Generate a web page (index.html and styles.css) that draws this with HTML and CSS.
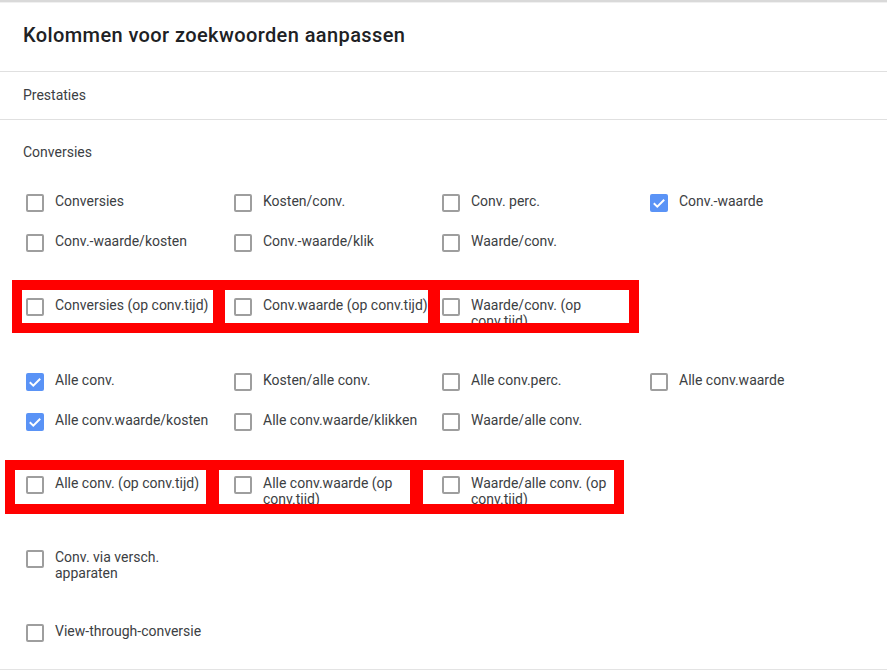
FILE: index.html
```html
<!DOCTYPE html>
<html lang="nl">
<head>
<meta charset="utf-8">
<title>Kolommen voor zoekwoorden aanpassen</title>
<link rel="stylesheet" href="styles.css">
</head>
<body>
<div class="dialog">
  <header class="header">
    <h1 class="title">Kolommen voor zoekwoorden aanpassen</h1>
  </header>
  <div class="section section-collapsed">Prestaties</div>
  <div class="section section-open">
    <div class="section-title">Conversies</div>

    <div class="grid grid-a">
      <label class="item"><span class="box"></span><span class="text">Conversies</span></label>
      <label class="item"><span class="box"></span><span class="text">Kosten/conv.</span></label>
      <label class="item"><span class="box"></span><span class="text">Conv. perc.</span></label>
      <label class="item"><span class="box checked"><svg viewBox="0 0 18 18"><polyline points="3.8,9.2 7.3,12.6 14.2,5.8"/></svg></span><span class="text">Conv.-waarde</span></label>
      <label class="item"><span class="box"></span><span class="text">Conv.-waarde/kosten</span></label>
      <label class="item"><span class="box"></span><span class="text">Conv.-waarde/klik</span></label>
      <label class="item"><span class="box"></span><span class="text">Waarde/conv.</span></label>
    </div>

    <div class="grid grid-hl grid-hl1">
      <label class="item"><span class="box"></span><span class="text">Conversies (op conv.tijd)</span></label>
      <label class="item"><span class="box"></span><span class="text">Conv.waarde (op conv.tijd)</span></label>
      <label class="item"><span class="box"></span><span class="text">Waarde/conv. (op conv.tijd)</span></label>
      <div class="mark mark1">
        <div class="hole"></div><div class="bar"></div><div class="hole"></div><div class="bar"></div><div class="hole"></div>
      </div>
    </div>

    <div class="grid grid-b">
      <label class="item"><span class="box checked"><svg viewBox="0 0 18 18"><polyline points="3.8,9.2 7.3,12.6 14.2,5.8"/></svg></span><span class="text">Alle conv.</span></label>
      <label class="item"><span class="box"></span><span class="text">Kosten/alle conv.</span></label>
      <label class="item"><span class="box"></span><span class="text">Alle conv.perc.</span></label>
      <label class="item"><span class="box"></span><span class="text">Alle conv.waarde</span></label>
      <label class="item"><span class="box checked"><svg viewBox="0 0 18 18"><polyline points="3.8,9.2 7.3,12.6 14.2,5.8"/></svg></span><span class="text">Alle conv.waarde/kosten</span></label>
      <label class="item"><span class="box"></span><span class="text">Alle conv.waarde/klikken</span></label>
      <label class="item"><span class="box"></span><span class="text">Waarde/alle conv.</span></label>
    </div>

    <div class="grid grid-hl grid-hl2">
      <label class="item"><span class="box"></span><span class="text">Alle conv. (op conv.tijd)</span></label>
      <label class="item"><span class="box"></span><span class="text">Alle conv.waarde (op conv.tijd)</span></label>
      <label class="item"><span class="box"></span><span class="text">Waarde/alle conv. (op conv.tijd)</span></label>
      <div class="mark mark2">
        <div class="hole"></div><div class="bar"></div><div class="hole"></div><div class="bar"></div><div class="hole"></div>
      </div>
    </div>

    <div class="grid grid-c">
      <label class="item"><span class="box"></span><span class="text">Conv. via versch. apparaten</span></label>
    </div>

    <div class="grid grid-d">
      <label class="item"><span class="box"></span><span class="text">View-through-conversie</span></label>
    </div>
  </div>
</div>
</body>
</html>
```

FILE: styles.css
```css
* { box-sizing: border-box; }

html, body {
  margin: 0;
  padding: 0;
  background: #ffffff;
}

body {
  font-family: Roboto, "Liberation Sans", Arial, sans-serif;
  color: #3c4043;
  overflow: hidden;
}

.dialog {
  width: 887px;
  border-top: 2px solid #d9d9d9;
  box-shadow: inset 0 1px 0 #f0f0f0;
  border-bottom: 1px solid #e3e3e3;
}

.header {
  height: 70px;
  padding: 21px 0 0 23px;
  border-bottom: 1px solid #e0e0e0;
}

.title {
  margin: 0;
  font-size: 20px;
  line-height: 24px;
  font-weight: 500;
  color: #202124;
  letter-spacing: 0.4px;
}

.section-collapsed {
  height: 48px;
  padding: 13px 0 0 23px;
  font-size: 14px;
  line-height: 20px;
  color: #3c4043;
  border-bottom: 1px solid #e0e0e0;
}

.section-open {
  padding: 22px 0 27px 23px;
}

.section-title {
  font-size: 14px;
  line-height: 20px;
  color: #3c4043;
}

.grid {
  display: grid;
  grid-template-columns: repeat(4, 208px);
  row-gap: 21px;
  align-items: start;
}

.grid-a { margin-top: 31px; }
.grid-hl1 { margin-top: 45px; }
.grid-b { margin-top: 43px; }
.grid-hl2 { margin-top: 44px; }
.grid-c { margin-top: 42px; }
.grid-d { margin-top: 42px; }

.grid-hl { position: relative; }

.item {
  display: flex;
  align-items: flex-start;
  font-size: 14px;
  line-height: 16px;
  color: #3c4043;
}

.box {
  flex: 0 0 18px;
  width: 18px;
  height: 18px;
  margin: 1px 11px 0 3px;
  border: 2px solid #9e9e9e;
  border-radius: 2px;
  background: #fff;
  display: flex;
}

.box.checked {
  border: none;
  background: #5a93f6;
}

.box svg {
  width: 18px;
  height: 18px;
}

.box polyline {
  fill: none;
  stroke: #ffffff;
  stroke-width: 2;
}

.text {
  width: 166px;
}

/* red annotation frames drawn over the screenshot */
.mark {
  position: absolute;
  border: 10px solid #ff0000;
  display: grid;
  z-index: 2;
  pointer-events: none;
}

.mark .bar { background: #ff0000; }

.mark1 {
  left: -11px;
  top: -17px;
  width: 627px;
  height: 53px;
  grid-template-columns: 191px 12px 203px 12px 189px;
}

.mark2 {
  left: -18px;
  top: -15px;
  width: 619px;
  height: 54px;
  grid-template-columns: 191px 13px 191px 13px 191px;
}
```
